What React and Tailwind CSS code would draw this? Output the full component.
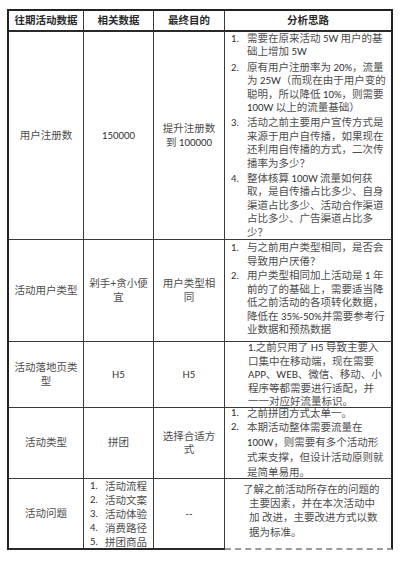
import React from "react";

function Txt({ s }) {
  const parts = s.split(/([\x20-\x7E]+)/);
  return parts.map((p, i) =>
    p === "" ? null : /^[\x20-\x7E]+$/.test(p) ? (
      <span key={i} className="text-[9.5px] text-[#2e2e2e]">
        {p}
      </span>
    ) : (
      <React.Fragment key={i}>{p}</React.Fragment>
    )
  );
}

function Lines({ lines }) {
  return lines.map((l, i) => (
    <div key={i} className="whitespace-nowrap">
      <Txt s={l} />
    </div>
  ));
}

function NumList({ items, gapClass, numW }) {
  return (
    <div className={"flex flex-col " + gapClass}>
      {items.map((lines, i) => (
        <div key={i} className="flex">
          <span className={"shrink-0 text-[9.5px] text-[#2e2e2e] " + numW}>{i + 1}.</span>
          <div>
            <Lines lines={lines} />
          </div>
        </div>
      ))}
    </div>
  );
}

const cellBase = "border-r border-b border-[#3a3a3a]";
const center = "flex items-center justify-center text-center leading-[13.4px]";

function C({ children, extra = "" }) {
  return <div className={cellBase + " " + center + " " + extra}>{children}</div>;
}

function C4({ children, extra = "" }) {
  return (
    <div className={"border-b border-r-2 border-[#3a3a3a] border-r-[#222] " + extra}>{children}</div>
  );
}

function H({ children, last }) {
  return (
    <div
      className={
        "flex items-center justify-center border-b-2 border-[#2a2a2a] font-bold text-[#2a2a2a] " +
        (last ? "border-r-2 border-r-[#222]" : "border-r border-r-[#3a3a3a]")
      }
    >
      {children}
    </div>
  );
}

export default function App() {
  return (
    <div className="w-[402px] h-[565px] bg-white pt-[9px] pl-[7px] font-['Lato','Noto_Sans_CJK_SC',sans-serif] text-[10.5px] text-[#4d4d4d]">
      <div className="grid w-max grid-cols-[75px_70px_71px_168px] grid-rows-[21px_208px_102px_66px_71px_71px] border-t-2 border-l-2 border-[#222]">
        <H>往期活动数据</H>
        <H>相关数据</H>
        <H>最终目的</H>
        <H last>分析思路</H>

        {/* Row 1 */}
        <C>用户注册数</C>
        <C>
          <Txt s="150000" />
        </C>
        <C>
          <div>
            <div>提升注册数</div>
            <div>
              <Txt s="到 100000" />
            </div>
          </div>
        </C>
        <C4 extra="pl-[6px] leading-[13.4px]">
          <NumList
            gapClass="gap-[2px]"
            numW="w-[16px]"
            items={[
              ["需要在原来活动 5W 用户的基", "础上增加 5W"],
              [
                "原有用户注册率为 20%，流量",
                "为 25W（而现在由于用户变的",
                "聪明，所以降低 10%，则需要",
                "100W 以上的流量基础）",
              ],
              [
                "活动之前主要用户宣传方式是",
                "来源于用户自传播，如果现在",
                "还利用自传播的方式，二次传",
                "播率为多少？",
              ],
              [
                "整体核算 100W 流量如何获",
                "取，是自传播占比多少、自身",
                "渠道占比多少、活动合作渠道",
                "占比多少、广告渠道占比多",
                "少？",
              ],
            ]}
          />
        </C4>

        {/* Row 2 */}
        <C>活动用户类型</C>
        <C>
          <div>
            <div>剁手+贪小便</div>
            <div>宜</div>
          </div>
        </C>
        <C>
          <div>
            <div>用户类型相</div>
            <div>同</div>
          </div>
        </C>
        <C4 extra="pl-[6px] pt-[1px] leading-[13.5px]">
          <NumList
            gapClass="gap-[1px]"
            numW="w-[16px]"
            items={[
              ["与之前用户类型相同，是否会", "导致用户厌倦？"],
              [
                "用户类型相同加上活动是 1 年",
                "前的了的基础上，需要适当降",
                "低之前活动的各项转化数据，",
                "降低在 35%-50%并需要参考行",
                "业数据和预热数据",
              ],
            ]}
          />
        </C4>

        {/* Row 3 */}
        <C>
          <div>
            <div>活动落地页类</div>
            <div>型</div>
          </div>
        </C>
        <C>
          <Txt s="H5" />
        </C>
        <C>
          <Txt s="H5" />
        </C>
        <C4 extra="pl-[23px] leading-[13.6px]">
          <div className="-mt-[1px]">
            <Lines
              lines={[
                "1.之前只用了 H5 导致主要入",
                "口集中在移动端，现在需要",
                "APP、WEB、微信、移动、小",
                "程序等都需要进行适配，并",
                "一一对应好流量标识。",
              ]}
            />
          </div>
        </C4>

        {/* Row 4 */}
        <C>活动类型</C>
        <C>拼团</C>
        <C>
          <div>
            <div>选择合适方</div>
            <div>式</div>
          </div>
        </C>
        <C4 extra="pl-[6px] leading-[14.4px]">
          <div className="-mt-[2px]">
            <NumList
              gapClass="gap-0"
              numW="w-[16px]"
              items={[
                ["之前拼团方式太单一。"],
                [
                  "本期活动整体需要流量在",
                  "100W，则需要有多个活动形",
                  "式来支撑，但设计活动原则就",
                  "是简单易用。",
                ],
              ]}
            />
          </div>
        </C4>

        {/* Row 5 */}
        <C extra="border-b-2 border-b-[#2a2a2a]">活动问题</C>
        <div className="flex items-center border-r border-b-2 border-[#3a3a3a] border-b-[#2a2a2a] pl-[6px] leading-[14px]">
          <NumList
            gapClass="gap-0"
            numW="w-[15px]"
            items={[["活动流程"], ["活动文案"], ["活动体验"], ["消费路径"], ["拼团商品"]]}
          />
        </div>
        <C extra="border-b-2 border-b-[#2a2a2a]">
          <Txt s="--" />
        </C>
        <div className="border-r-2 border-r-[#222] border-b-2 border-b-[#9a9a9a] [border-bottom-style:dashed] pl-[24px] pt-[3px] leading-[14px]">
          <div className="whitespace-nowrap -ml-[6px]">了解之前活动所存在的问题的</div>
          <Lines lines={["主要因素，并在本次活动中", "加 改进，主要改进方式以数", "据为标准。"]} />
        </div>
      </div>
    </div>
  );
}
